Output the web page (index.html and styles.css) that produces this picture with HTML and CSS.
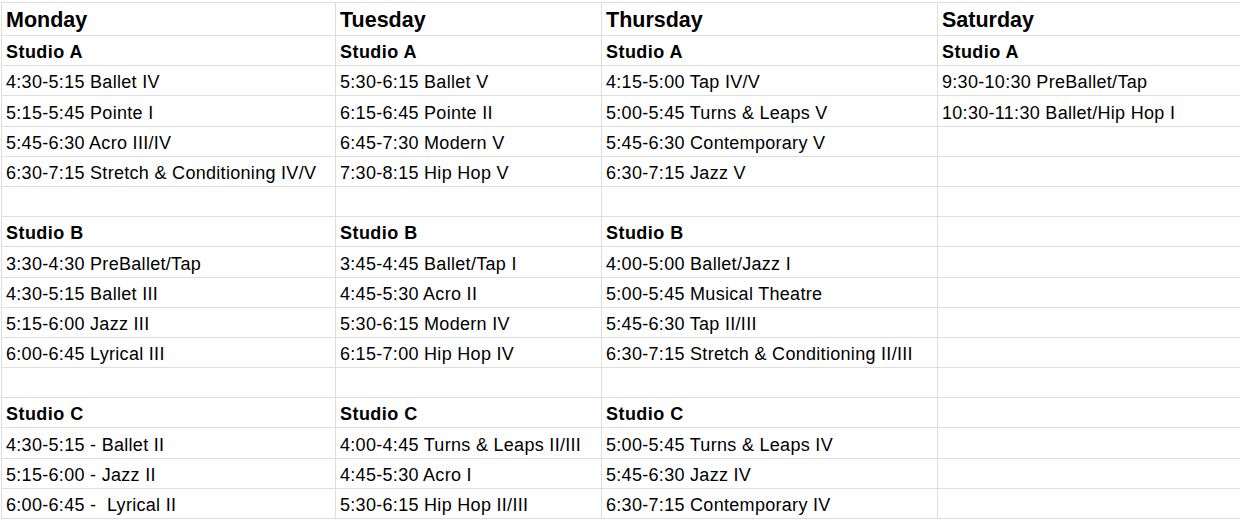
FILE: index.html
```html
<!DOCTYPE html>
<html>
<head>
<meta charset="utf-8">
<link rel="stylesheet" href="styles.css">
</head>
<body>
<div class="sheet">
  <div class="cell day">Monday</div><div class="cell day">Tuesday</div><div class="cell day">Thursday</div><div class="cell day">Saturday</div>

  <div class="cell studio">Studio A</div><div class="cell studio">Studio A</div><div class="cell studio">Studio A</div><div class="cell studio">Studio A</div>
  <div class="cell">4:30-5:15 Ballet IV</div><div class="cell">5:30-6:15 Ballet V</div><div class="cell">4:15-5:00 Tap IV/V</div><div class="cell">9:30-10:30 PreBallet/Tap</div>
  <div class="cell">5:15-5:45 Pointe I</div><div class="cell">6:15-6:45 Pointe II</div><div class="cell">5:00-5:45 Turns &amp; Leaps V</div><div class="cell">10:30-11:30 Ballet/Hip Hop I</div>
  <div class="cell">5:45-6:30 Acro III/IV</div><div class="cell">6:45-7:30 Modern V</div><div class="cell">5:45-6:30 Contemporary V</div><div class="cell"></div>
  <div class="cell">6:30-7:15 Stretch &amp; Conditioning IV/V</div><div class="cell">7:30-8:15 Hip Hop V</div><div class="cell">6:30-7:15 Jazz V</div><div class="cell"></div>
  <div class="cell"></div><div class="cell"></div><div class="cell"></div><div class="cell"></div>

  <div class="cell studio">Studio B</div><div class="cell studio">Studio B</div><div class="cell studio">Studio B</div><div class="cell"></div>
  <div class="cell">3:30-4:30 PreBallet/Tap</div><div class="cell">3:45-4:45 Ballet/Tap I</div><div class="cell">4:00-5:00 Ballet/Jazz I</div><div class="cell"></div>
  <div class="cell">4:30-5:15 Ballet III</div><div class="cell">4:45-5:30 Acro II</div><div class="cell">5:00-5:45 Musical Theatre</div><div class="cell"></div>
  <div class="cell">5:15-6:00 Jazz III</div><div class="cell">5:30-6:15 Modern IV</div><div class="cell">5:45-6:30 Tap II/III</div><div class="cell"></div>
  <div class="cell">6:00-6:45 Lyrical III</div><div class="cell">6:15-7:00 Hip Hop IV</div><div class="cell">6:30-7:15 Stretch &amp; Conditioning II/III</div><div class="cell"></div>
  <div class="cell"></div><div class="cell"></div><div class="cell"></div><div class="cell"></div>

  <div class="cell studio">Studio C</div><div class="cell studio">Studio C</div><div class="cell studio">Studio C</div><div class="cell"></div>
  <div class="cell">4:30-5:15 - Ballet II</div><div class="cell">4:00-4:45 Turns &amp; Leaps II/III</div><div class="cell">5:00-5:45 Turns &amp; Leaps IV</div><div class="cell"></div>
  <div class="cell">5:15-6:00 - Jazz II</div><div class="cell">4:45-5:30 Acro I</div><div class="cell">5:45-6:30 Jazz IV</div><div class="cell"></div>
  <div class="cell">6:00-6:45 -  Lyrical II</div><div class="cell">5:30-6:15 Hip Hop II/III</div><div class="cell">6:30-7:15 Contemporary IV</div><div class="cell"></div>
</div>
</body>
</html>
```
FILE: styles.css
```css
html, body {
  margin: 0;
  padding: 0;
  background: #ffffff;
  overflow: hidden;
}

body {
  padding: 2px 0 0 1px;
  height: 522px;
  box-sizing: border-box;
}

.sheet {
  display: grid;
  grid-template-columns: 333px 265px 335px 320px;
  grid-template-rows: 32px;
  grid-auto-rows: 29.2px;
  gap: 1px;
  padding: 1px;
  background: #dedede;
  width: max-content;
  font-family: "Liberation Sans", Arial, Helvetica, sans-serif;
  color: #000000;
}

.cell {
  background: #ffffff;
  display: flex;
  align-items: flex-end;
  padding: 0 4px 2px 4px;
  font-size: 18px;
  line-height: 21px;
  letter-spacing: 0.3px;
  white-space: pre;
  overflow: hidden;
}

.day {
  font-weight: bold;
  font-size: 21.5px;
  line-height: 25px;
  letter-spacing: 0;
  padding-bottom: 2px;
}

.studio {
  font-weight: bold;
  letter-spacing: 0.45px;
}
```
